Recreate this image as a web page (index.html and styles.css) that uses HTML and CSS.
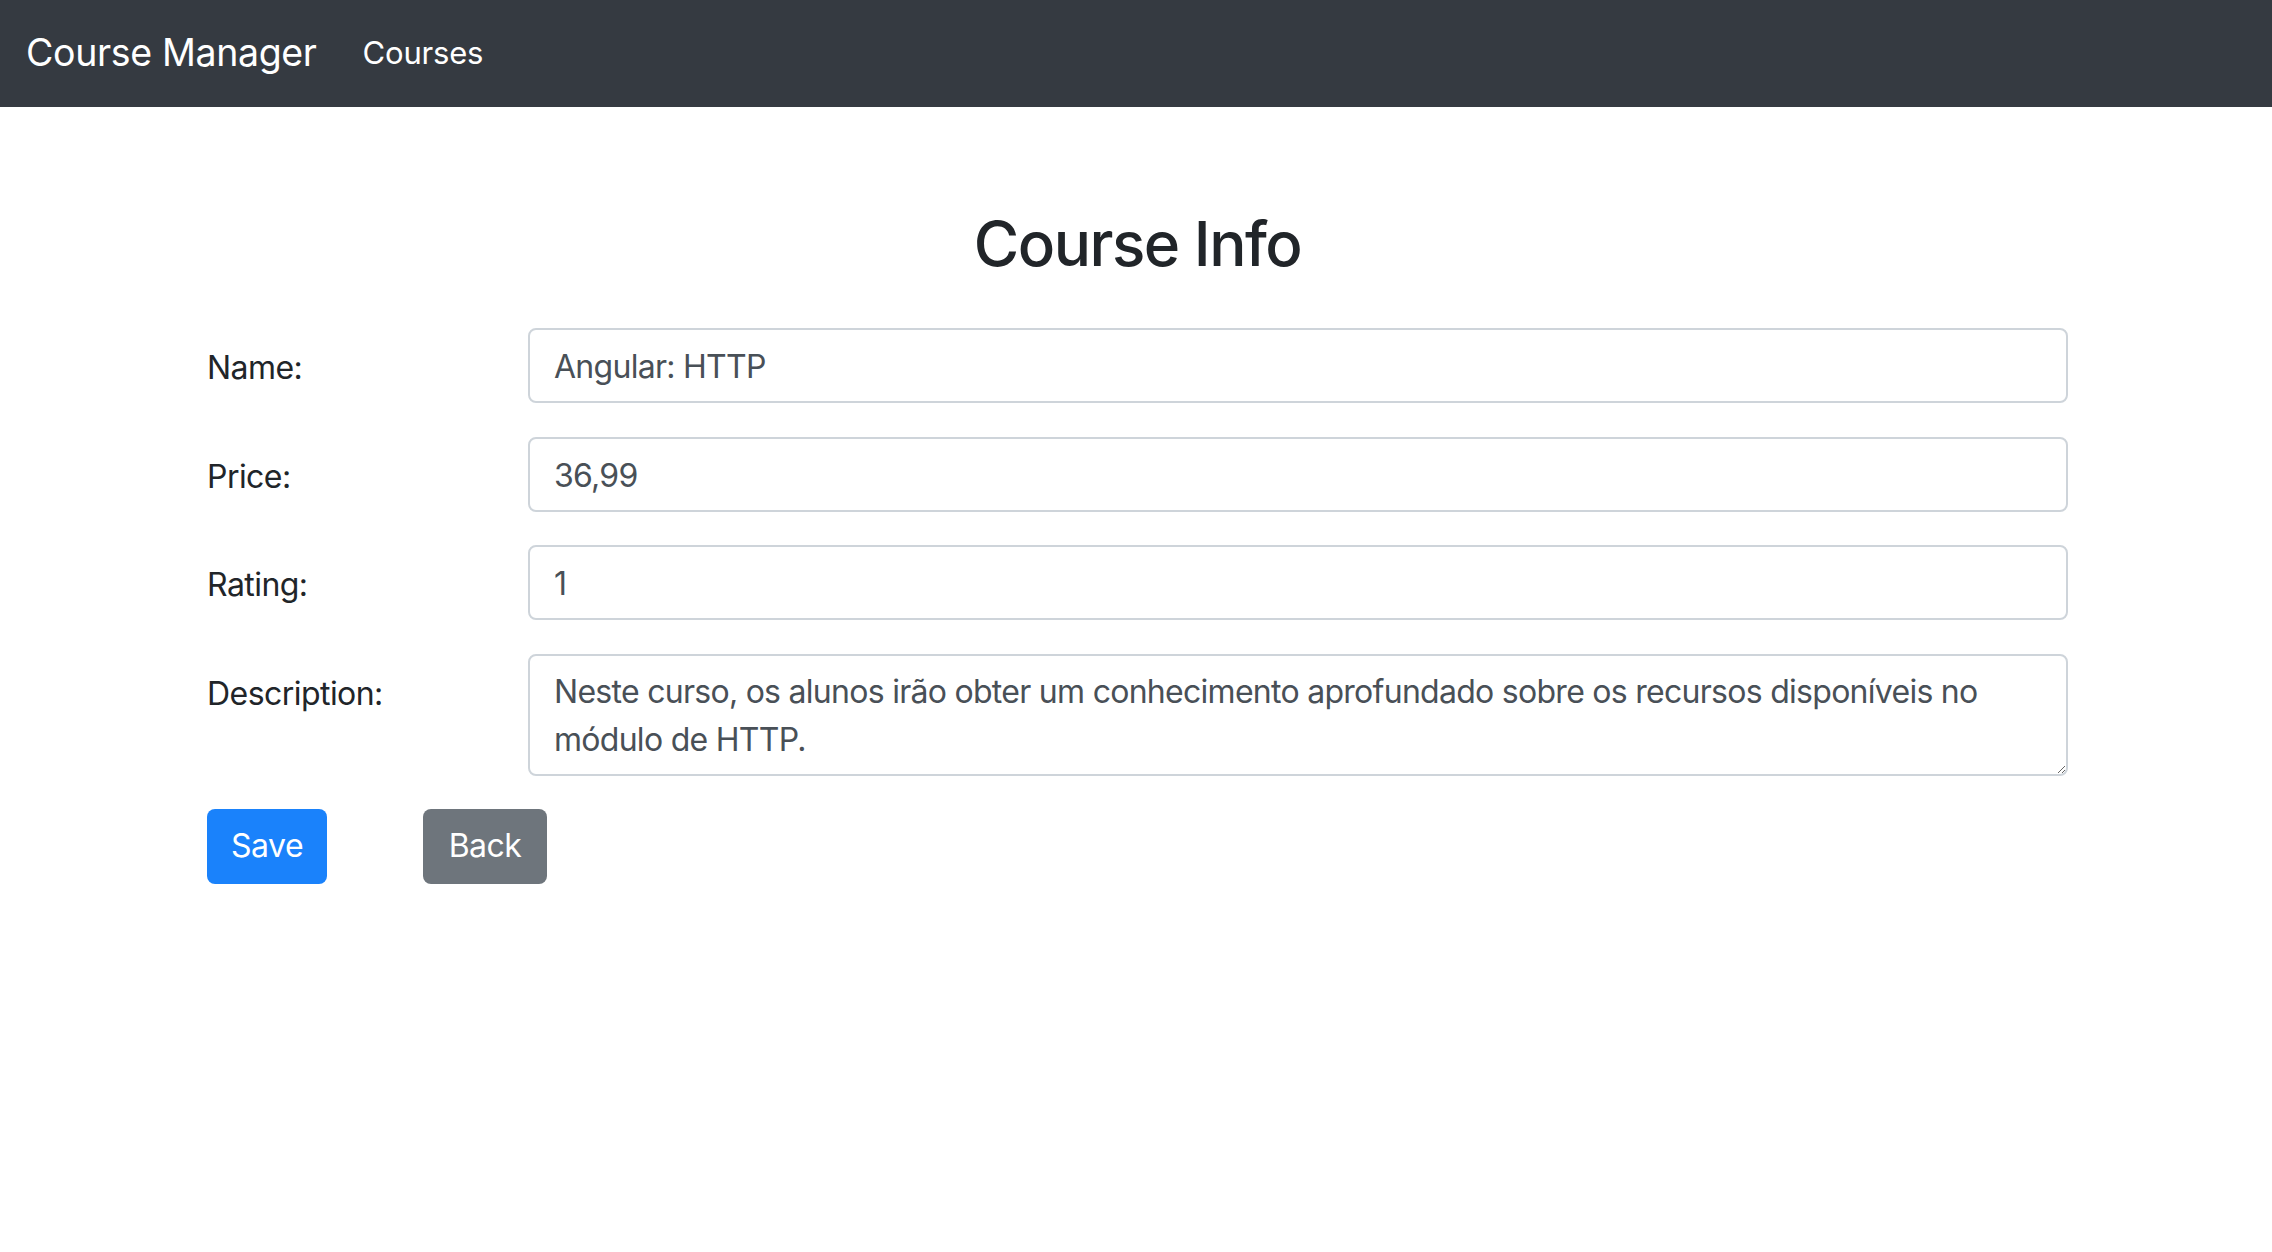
FILE: index.html
```html
<!DOCTYPE html>
<html lang="pt">
<head>
<meta charset="utf-8">
<title>Course Manager</title>
<link rel="stylesheet" href="styles.css">
</head>
<body>
<nav class="navbar">
  <a class="brand" href="#">Course Manager</a>
  <a class="nav-link" href="#">Courses</a>
</nav>
<main class="container">
  <h2 class="title">Course Info</h2>
  <form class="form">
    <label class="label" for="name">Name:</label>
    <input class="field" id="name" type="text" value="Angular: HTTP">
    <label class="label" for="price">Price:</label>
    <input class="field" id="price" type="text" value="36,99">
    <label class="label" for="rating">Rating:</label>
    <input class="field" id="rating" type="text" value="1">
    <label class="label" for="desc">Description:</label>
    <textarea class="field area" id="desc">Neste curso, os alunos irão obter um conhecimento aprofundado sobre os recursos disponíveis no módulo de HTTP.</textarea>
  </form>
  <div class="actions">
    <button class="btn btn-primary" type="button">Save</button>
    <button class="btn btn-secondary" type="button">Back</button>
  </div>
</main>
</body>
</html>
```

FILE: styles.css
```css
* { box-sizing: border-box; }
html, body { margin: 0; padding: 0; background: #fff; }
body {
  font-family: Inter, "Liberation Sans", sans-serif;
  color: #212529;
  font-size: 32px;
  line-height: 48px;
}
.navbar {
  height: 107px;
  background: #353a41;
  display: flex;
  align-items: center;
  padding: 0 26px 2px;
}
.brand {
  color: #fff;
  text-decoration: none;
  font-size: 37.5px;
  line-height: 48px;
  letter-spacing: -0.35px;
  margin-right: 46px;
}
.nav-link {
  color: #fff;
  text-decoration: none;
  font-size: 31px;
  line-height: 48px;
  letter-spacing: -0.2px;
}
.container {
  width: 1861px;
  margin: 0 0 0 207px;
  padding-top: 98px;
}
.title {
  margin: 0 0 46px;
  text-align: center;
  font-size: 62px;
  font-weight: 500;
  line-height: 77px;
  letter-spacing: -1.5px;
}
.form {
  display: grid;
  grid-template-columns: 321px 1fr;
  row-gap: 33.5px;
}
.label {
  padding-top: 16px;
  font-size: 32px;
  line-height: 48px;
  letter-spacing: -0.55px;
}
.field {
  display: block;
  width: 100%;
  height: 75px;
  margin: 0;
  padding: 12.5px 24px 10.5px;
  border: 2px solid #ced4da;
  border-radius: 8px;
  background: #fff;
  color: #495057;
  font-family: Inter, "Liberation Sans", sans-serif;
  font-size: 32px;
  line-height: 48px;
  letter-spacing: -0.72px;
}
.area {
  height: 122px;
  resize: vertical;
  overflow: hidden;
}
.actions {
  display: flex;
  gap: 96px;
  margin-top: 33px;
}
.btn {
  height: 75px;
  padding: 0 24px;
  border: none;
  border-radius: 8px;
  color: #fff;
  font-family: Inter, "Liberation Sans", sans-serif;
  font-size: 32px;
  line-height: 48px;
  letter-spacing: -0.5px;
}
.btn-primary { background: #1a82fb; width: 120px; }
.btn-secondary { background: #6e757c; width: 124px; }
```
